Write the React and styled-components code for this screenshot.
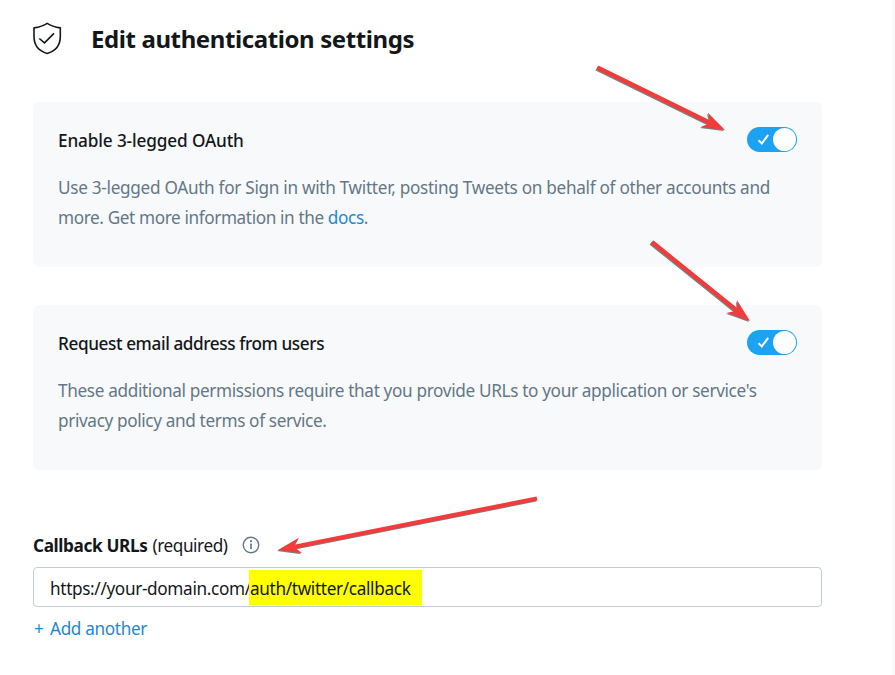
import React from "react";
import styled, { createGlobalStyle } from "styled-components";

const GlobalStyle = createGlobalStyle`
  * { box-sizing: border-box; }
  html, body { margin: 0; background: #fff; overflow: hidden; }
  body { font-family: "Noto Sans", "Open Sans", sans-serif; color: #14171a; }
`;

const Page = styled.main`
  position: relative;
  width: 895px;
  height: 675px;
  padding: 22px 70px 0 33px;
  border-right: 3px solid #f7f9fb;
  background: #fff;
`;

const Header = styled.header`
  display: flex;
  align-items: center;
  gap: 29px;
  height: 34px;
  margin-bottom: 46px;
`;

const Text = styled.span`
  white-space: pre;
  letter-spacing: ${(p) => p.$track || 0}px;
`;

const Title = styled.h1`
  margin: 0;
  font-size: 24px;
  line-height: 34px;
  font-weight: 700;
  white-space: nowrap;
  letter-spacing: ${(p) => p.$track || 0}px;
`;

const Card = styled.section`
  height: 165px;
  margin-bottom: 38px;
  padding: 25px;
  border-radius: 6px;
  background: #f7f9fb;
`;

const CardHead = styled.div`
  display: flex;
  justify-content: space-between;
  height: 46px;
`;

const CardTitle = styled.h2`
  margin: 0;
  font-size: 17.2px;
  line-height: 27px;
  font-weight: 500;
`;

const Description = styled.p`
  display: flex;
  flex-direction: column;
  margin: 0;
  font-size: 17.2px;
  line-height: 30px;
  color: #657786;
`;

const Link = styled.a`
  color: #2488d0;
  text-decoration: none;
`;

const Switch = styled.button`
  display: flex;
  align-items: center;
  width: 50px;
  height: 25px;
  padding: 0 1px 0 10px;
  border: 0;
  border-radius: 13px;
  background: #1da1f2;
`;

const Knob = styled.span`
  width: 23px;
  height: 23px;
  margin-left: auto;
  border-radius: 50%;
  background: #fff;
`;

const Label = styled.div`
  display: flex;
  align-items: center;
  height: 30px;
  margin-top: 60px;
  font-size: 17.2px;
`;

const Strong = styled.strong`
  font-weight: 700;
  margin-right: 5px;
`;

const InfoIcon = styled.svg`
  margin-left: 14px;
`;

const UrlField = styled.div`
  display: flex;
  align-items: center;
  height: 40px;
  margin-top: 7px;
  padding-left: 16px;
  border: 1px solid #c0ccd6;
  border-radius: 4px;
  font-size: 17.2px;
`;

const Prefix = styled.div`
  width: 199px;
  padding-top: 2px;
  white-space: nowrap;
`;

const Highlight = styled.mark`
  display: flex;
  align-items: center;
  width: 173px;
  height: 35px;
  padding: 2px 0 0 1px;
  color: #14171a;
  background: #ff0;
`;

const AddLink = styled.a`
  display: flex;
  width: max-content;
  margin: 7px 0 0 1px;
  font-size: 17.2px;
  line-height: 30px;
  color: #2488d0;
`;

const Plus = styled.span`
  width: 16px;
`;

const Arrows = styled.svg`
  position: absolute;
  inset: 0;
  pointer-events: none;
  filter: drop-shadow(-0.3px 1px 0.4px rgba(0, 0, 0, 0.5));
`;

function Toggle({ label }) {
  return (
    <Switch role="switch" aria-checked="true" aria-label={label}>
      <svg width="13" height="13" viewBox="0 0 13 13" fill="none">
        <path d="M1.5 7.3 4.8 10.4 11.2 1.8" stroke="#fff" strokeWidth="2" />
      </svg>
      <Knob />
    </Switch>
  );
}

function SettingCard({ title, track, children }) {
  return (
    <Card>
      <CardHead>
        <CardTitle><Text $track={track}>{title}</Text></CardTitle>
        <Toggle label={title} />
      </CardHead>
      <Description>{children}</Description>
    </Card>
  );
}

function Arrow({ x, y, tx, ty }) {
  const length = Math.hypot(tx - x, ty - y);
  const angle = (Math.atan2(ty - y, tx - x) * 180) / Math.PI;
  return (
    <path
      transform={`translate(${tx} ${ty}) rotate(${angle})`}
      d={`M${-length} -2.1H-18L-23 -8 0 0 -23 8 -18 2.1H${-length}Z`}
      fill="#f23b3b"
    />
  );
}

export default function App() {
  return (
    <>
      <GlobalStyle />
      <Page>
        <Header>
          <svg width="29" height="34" viewBox="0 0 29 34" fill="none" stroke="#14171a" strokeWidth="1.6">
            <path d="M14.2 1.4C10.6 3.8 5.8 5.2 1 5.9V14.5C1 23 5.8 29 14.2 31.5C22.5 29 27.3 23 27.3 14.5V5.9C22.5 5.2 17.8 3.8 14.2 1.4Z" strokeLinejoin="round" />
            <path d="M6.3 16.5 11.5 20.8 21 11.4" />
          </svg>
          <Title $track={-0.4}>Edit authentication settings</Title>
        </Header>
        <SettingCard title="Enable 3-legged OAuth" track={-0.13}>
          <Text $track={-0.3}>Use 3-legged OAuth for Sign in with Twitter, posting Tweets on behalf of other accounts and</Text>
          <Text $track={-0.39}>more. Get more information in the <Link>docs</Link>.</Text>
        </SettingCard>
        <SettingCard title="Request email address from users" track={-0.41}>
          <Text $track={-0.35}>These additional permissions require that you provide URLs to your application or service's</Text>
          <Text $track={-0.37}>privacy policy and terms of service.</Text>
        </SettingCard>
        <Label>
          <Strong><Text $track={-0.37}>Callback URLs</Text></Strong>
          <Text $track={-0.43}>(required)</Text>
          <InfoIcon width="18" height="18" viewBox="0 0 18 18" fill="none" stroke="#657786" strokeWidth="1.4">
            <circle cx="9" cy="9" r="7.7" />
            <path d="M9 7.6V13" strokeWidth="1.7" />
            <circle cx="9" cy="5.2" r="1.1" fill="#657786" stroke="none" />
          </InfoIcon>
        </Label>
        <UrlField>
          <Prefix><Text $track={-0.35}>https://your-domain.com/</Text></Prefix>
          <Highlight><Text $track={-0.34}>auth/twitter/callback</Text></Highlight>
        </UrlField>
        <AddLink><Plus>+</Plus><Text $track={-0.35}>Add another</Text></AddLink>
        <Arrows width="895" height="675" viewBox="0 0 895 675">
          <Arrow x={597.5} y={67.5} tx={725} ty={130} />
          <Arrow x={652} y={242} tx={750} ty={321} />
          <Arrow x={537} y={498.5} tx={278} ty={550} />
        </Arrows>
      </Page>
    </>
  );
}
